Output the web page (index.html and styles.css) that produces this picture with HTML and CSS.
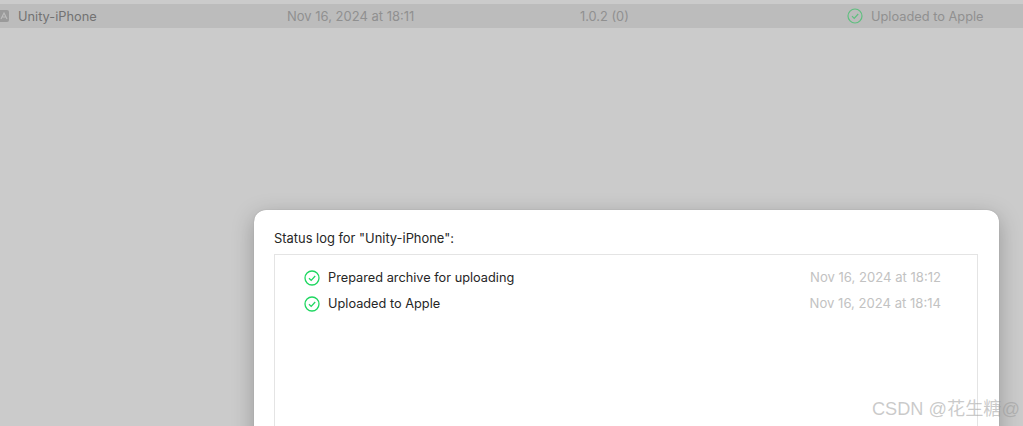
FILE: index.html
```html
<!DOCTYPE html>
<html lang="en">
<head>
    <meta charset="UTF-8">
    <title>Status log</title>
    <link rel="stylesheet" href="styles.css">
</head>
<body>
<div id="page">
    <div class="row">
        <span class="app-icon">
            <svg width="10" height="14" viewBox="0 0 10 14"><rect x="-2" y="1" width="11" height="12" rx="2" fill="#9a9a9a"/><path d="M1 10l3-6 3 6M2 8h4" fill="none" stroke="#bdbdbd" stroke-width="1.1"/></svg>
        </span>
        <span class="name">Unity-iPhone</span>
        <span class="date">Nov 16, 2024 at 18:11</span>
        <span class="version">1.0.2 (0)</span>
        <span class="status">
            <svg class="check" width="16" height="16" viewBox="0 0 16 16"><circle cx="8" cy="8" r="7" fill="none" stroke="#5fbf7f" stroke-width="1.2"/><path d="M5 8.2l2.2 2.2 4-4.4" fill="none" stroke="#5fbf7f" stroke-width="1.2"/></svg>
            Uploaded to Apple
        </span>
    </div>
    <div class="sheet">
        <p class="title">Status log for "Unity-iPhone":</p>
        <div class="log">
            <div class="entry">
                <svg class="check" width="16" height="16" viewBox="0 0 16 16"><circle cx="8" cy="8" r="7" fill="none" stroke="#1ed760" stroke-width="1.3"/><path d="M5 8.2l2.2 2.2 4-4.4" fill="none" stroke="#1ed760" stroke-width="1.3"/></svg>
                <span class="msg">Prepared archive for uploading</span>
                <span class="time">Nov 16, 2024 at 18:12</span>
            </div>
            <div class="entry">
                <svg class="check" width="16" height="16" viewBox="0 0 16 16"><circle cx="8" cy="8" r="7" fill="none" stroke="#1ed760" stroke-width="1.3"/><path d="M5 8.2l2.2 2.2 4-4.4" fill="none" stroke="#1ed760" stroke-width="1.3"/></svg>
                <span class="msg">Uploaded to Apple</span>
                <span class="time">Nov 16, 2024 at 18:14</span>
            </div>
        </div>
    </div>
    <div class="watermark">CSDN @花生糖@</div>
</div>
</body>
</html>
```

FILE: styles.css
```css
*{
    margin: 0;
    padding: 0;
    box-sizing: border-box;
}
html,body{
    height: 100%;
    overflow: hidden;
}
body{
    background: #cbcbcb;
    font-family: "Inter", "Noto Sans CJK SC", sans-serif;
    font-size: 12.8px;
}
#page{
    position: relative;
    height: 426px;
    padding-top: 4px;
    overflow: hidden;
}
.row{
    display: flex;
    align-items: center;
    height: 24px;
    background: #bcbcbc;
    color: #7f7f7f;
}
.row .app-icon{
    display: flex;
    width: 18px;
}
.row .name{
    width: 269px;
    color: #727272;
}
.row .date{
    width: 293px;
    color: #909090;
    font-size: 13px;
}
.row .version{
    width: 267px;
    color: #909090;
}
.row .status{
    display: flex;
    align-items: center;
    gap: 8px;
    color: #909090;
}
.sheet{
    width: 745px;
    height: 300px;
    margin: 182px 0 0 254px;
    padding: 21px 21px 0 20px;
    background: #fff;
    border-radius: 12px 12px 0 0;
    box-shadow: 0 0 1px #8a8a8a, 0 6px 22px rgba(0,0,0,.26);
}
.title{
    height: 23px;
    color: #262626;
    font-size: 12.9px;
    line-height: 16px;
}
.log{
    height: 200px;
    padding-top: 10px;
    border: 1px solid #e4e4e4;
}
.entry{
    display: flex;
    align-items: center;
    height: 26px;
    padding: 0 36px 0 29px;
}
.entry .msg{
    flex: 1;
    margin: 0 0 2px 8px;
    color: #262626;
    font-size: 12.75px;
}
.entry .time{
    margin-bottom: 2px;
    color: #c2c2c2;
    font-size: 13.1px;
}
.watermark{
    position: absolute;
    right: 3px;
    top: 397px;
    color: rgba(150,150,150,.5);
    font-family: "Liberation Sans", "Noto Sans CJK SC", sans-serif;
    font-size: 18.2px;
    line-height: 24px;
}
```
